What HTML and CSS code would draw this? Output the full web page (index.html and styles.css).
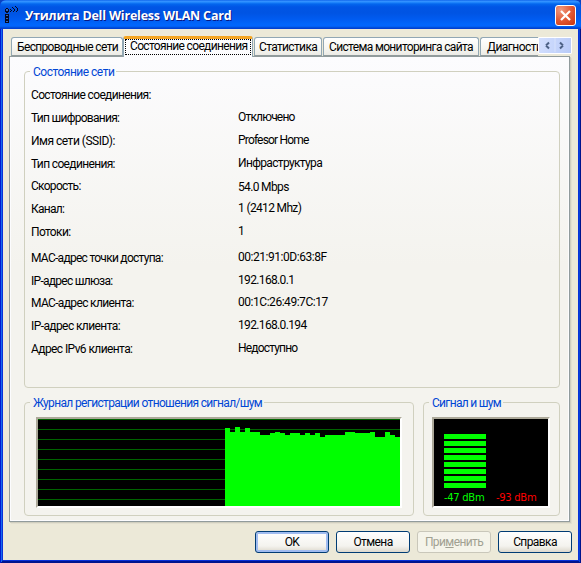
FILE: index.html
```html
<!DOCTYPE html>
<html lang="ru">
<head>
<meta charset="utf-8">
<title>Утилита Dell Wireless WLAN Card</title>
<link rel="stylesheet" href="styles.css">
</head>
<body>
<div class="window">
  <header class="titlebar">
    <svg class="app-icon" width="16" height="18" viewBox="0 0 16 18" shape-rendering="crispEdges"><path fill="#050a20" d="M1 3h1v3H1zM2 2h2v1H2zM4 3h1v3H4zM2 5h2v2H2zM1 8h4v9H1z"/><path fill="#3c66b8" d="M2 9h2v1H2zM2 12h2v1H2zM2 15h2v1H2zM2 3h2v2H2z"/><path fill="#050a20" d="M6 3h1v1H6zM7 4h1v1H7zM6 5h1v1H6zM8 1h1v1H8zM9 2h1v1H9zM10 3h1v2h-1zM9 5h1v1H9zM11 0h1v1h-1zM12 1h1v1h-1zM13 2h1v3h-1zM12 5h1v1h-1z"/></svg>
    <h1 class="title">Утилита Dell Wireless WLAN Card</h1>
    <button class="close" aria-label="Закрыть"><svg width="19" height="19" viewBox="0 0 19 19"><path d="M5 5l9 9M14 5l-9 9" stroke="#fff" stroke-width="2.2"/></svg></button>
  </header>
  <main class="client">
    <nav class="tabs">
      <div class="tab t1"><span>Беспроводные сети</span></div>
      <div class="tab t2 active"><span>Состояние соединения</span></div>
      <div class="tab t3"><span>Статистика</span></div>
      <div class="tab t4"><span>Система мониторинга сайта</span></div>
      <div class="tab t5"><span>Диагностика</span></div>
      <div class="spinner">
        <svg width="34" height="17" viewBox="0 0 34 17"><path d="M17 1v14" stroke="#d7e2fc"/><path d="M8 8.5l3-3M8 8.5l3 3M25 8.5l-3-3M25 8.5l-3 3" fill="none" stroke="#4d6185" stroke-width="2"/></svg>
      </div>
    </nav>
    <section class="panel">
      <section class="group status">
        <h2 class="legend l1">Состояние сети</h2>
        <dl class="rows">
          <dt class="a1">Состояние соединения:</dt><dd></dd>
          <dt class="a2">Тип шифрования:</dt><dd class="b2">Отключено</dd>
          <dt class="a3">Имя сети (SSID):</dt><dd class="b3">Profesor Home</dd>
          <dt class="a4">Тип соединения:</dt><dd class="b4">Инфраструктура</dd>
          <dt class="a5">Скорость:</dt><dd class="b5">54.0 Mbps</dd>
          <dt class="a6">Канал:</dt><dd class="b6">1 (2412 Mhz)</dd>
          <dt class="a7">Потоки:</dt><dd class="b7">1</dd>
          <dt class="a8">MAC-адрес точки доступа:</dt><dd class="b8">00:21:91:0D:63:8F</dd>
          <dt class="a9">IP-адрес шлюза:</dt><dd class="b9">192.168.0.1</dd>
          <dt class="a10">MAC-адрес клиента:</dt><dd class="b10">00:1C:26:49:7C:17</dd>
          <dt class="a11">IP-адрес клиента:</dt><dd class="b11">192.168.0.194</dd>
          <dt class="a12">Адрес IPv6 клиента:</dt><dd class="b12">Недоступно</dd>
        </dl>
      </section>
      <div class="charts">
        <section class="group log">
          <h2 class="legend l2">Журнал регистрации отношения сигнал/шум</h2>
          <div class="screen">
            <svg width="362" height="87" viewBox="0 0 362 87" shape-rendering="crispEdges"><path stroke="#006300" d="M0 .5h362M0 10.5h362M0 20.5h362M0 30.5h362M0 40.5h362M0 50.5h362M0 60.5h362M0 70.5h362M0 80.5h362"/><path fill="#0f0" d="M187 87V9h5v4h5V8h5v5h5V9h5v4h10v3h10v-2h5v-1h5v1h5v2h5v-2h10v2h5v-2h5v2h5v-2h5v4h5v-2h20v-3h10v1h15v-1h5v5h10v-5h5v3h5v2h5v69z"/></svg>
          </div>
        </section>
        <section class="group level">
          <h2 class="legend l3">Сигнал и шум</h2>
          <div class="screen meter">
            <div class="bars"><i></i><i></i><i></i><i></i><i></i><i></i><i></i><i></i></div>
            <div class="dbm"><span class="sig">-47 dBm</span><span class="noise">-93 dBm</span></div>
          </div>
        </section>
      </div>
    </section>
    <footer class="buttons">
      <button class="btn default"><span class="k1">OK</span></button>
      <button class="btn"><span class="k2">Отмена</span></button>
      <button class="btn disabled" disabled><span class="k3">При<u>м</u>енить</span></button>
      <button class="btn"><span class="k4">Справка</span></button>
    </footer>
  </main>
</div>
</body>
</html>
```
FILE: styles.css
```css
* { box-sizing: border-box; }
body { margin: 0; background: #0a42c0; font: 12px/14px Roboto, "Liberation Sans", sans-serif; color: #000; overflow: hidden; }
h1, h2, dl, dd { margin: 0; font: inherit; }
button { font: inherit; padding: 0; margin: 0; }
.window { width: 581px; height: 563px; background: #0831d9; border-radius: 6px 6px 0 0; padding: 0 3px 3px; overflow: hidden; box-shadow: inset 1px 0 #0019cf, inset -1px 0 #00138c, inset 0 -1px #00138c, inset 2px 0 #166aee, inset -2px 0 #0441d8, inset 0 -2px #001590; }
.titlebar { display: flex; align-items: center; height: 29px; margin: 0 -3px; padding: 2px 5px 0 4px; background: linear-gradient(#0058e6 0, #3a93ff 1px, #288eff 2px, #0366ee 4px, #0055e5 7px, #0054e3 13px, #005bf0 19px, #0066fb 24px, #0265fe 26px, #005be8 27px, #0043cf 28px, #003dd7 29px); }
.app-icon { margin: -1px 5px 0 0; }
.title { flex: 1; color: #fff; font: bold 12.5px/18px "Open Sans", sans-serif; letter-spacing: -.2px; white-space: nowrap; text-shadow: 1px 1px #0a1883; }
.close { width: 21px; height: 21px; border: 1px solid #fff; border-radius: 3px; background: radial-gradient(circle at 25% 20%, #f09a80, #e25a36 50%, #c8330c); display: flex; }
.client { height: 531px; background: #ece9d8; padding: 7px 7px 0 6px; }
.tabs { display: flex; align-items: flex-end; height: 21px; padding-left: 2px; margin-bottom: -1px; position: relative; z-index: 1; letter-spacing: -.65px; }
.tab { height: 19px; margin-bottom: 1px; border: 1px solid #91a7b4; border-bottom-color: #919b9c; border-radius: 3px 3px 0 0; background: linear-gradient(#fff, #f6f6f1 60%, #ecebe6); white-space: nowrap; overflow: hidden; line-height: 19px; padding-left: 5px; flex: none; }
.t1 { width: 112px; }
.t2 { width: 130px; }
.t3 { width: 68px; margin-left: 1px; padding-left: 4px; }
.t4 { width: 156px; margin-left: 1px; }
.t5 { width: 58px; margin-left: 1px; border-right: 0; border-radius: 3px 0 0 0; padding-left: 6px; letter-spacing: -.55px; }
.tab.active { height: 21px; margin-bottom: 0; background: #fcfcfe; border-top: 3px solid #f5a623; border-bottom: 0; padding: 0 1px; }
.tab.active span { display: block; height: 16px; border: 1px dotted #000; line-height: 12px; padding-left: 4px; }
.spinner { width: 34px; height: 17px; margin-bottom: 3px; border: 1px solid #fff; border-radius: 1px; background: linear-gradient(100deg, #d3dffe, #b9cbf8); display: flex; align-items: center; justify-content: center; overflow: hidden; flex: none; }
.spinner svg { flex: none; }
.panel { width: 561px; height: 466px; border: 1px solid #919b9c; box-shadow: inset 0 0 0 1px #fcfcfe, 1px 1px #d0cebf, 2px 2px #e3e0d0; background: linear-gradient(#fcfcfe, #f4f3ee 45%, #f4f3ee); padding: 14px 9px 0 14px; }
.group { border: 1px solid #d0d0bf; border-radius: 4px; }
.legend { color: #0046d5; width: max-content; margin: -7px 0 0 5px; padding: 0 2px 0 3px; white-space: nowrap; }
.status { width: 536px; height: 317px; }
.status .legend { background: #fbfbfc; }
.l1 { letter-spacing: -.5px; }
.l2 { letter-spacing: -.65px; }
.l3 { letter-spacing: -.7px; }
.rows { display: grid; grid-template-columns: 207px 1fr; grid-template-rows: 23px 23px 23px 22px 23px 23px 26px 23px 22px 23px 23px 23px; padding: 9px 0 0 6px; white-space: nowrap; letter-spacing: -.65px; }
dd { margin-top: -1px; }
.a2, .a5, .a6, .a8, .a9 { letter-spacing: -.72px; }
.a3 { letter-spacing: -.5px; }
.a11, .a12 { letter-spacing: -.59px; }
.b2, .b3, .b12 { letter-spacing: -.82px; }
.b8, .b10 { letter-spacing: -.46px; }
.b5 { margin-top: 1px; }
.charts { display: flex; gap: 9px; margin-top: 14px; }
.charts .group { height: 114px; flex: none; }
.charts .legend { background: #f4f3ee; }
.log { width: 390px; }
.level { width: 137px; }
.screen { width: 366px; height: 91px; margin: 7px 0 0 11px; border: 2px solid; border-color: #aca899 #fff #fff #aca899; background: #000; display: flex; }
.meter { width: 118px; margin-left: 8px; flex-direction: column; padding: 15px 0 0 10px; }
.bars { display: grid; gap: 2px; width: 42px; }
.bars i { height: 5px; background: #0f0; }
.dbm { display: flex; font: 10px/12px "DejaVu Sans", sans-serif; letter-spacing: -.3px; margin-top: 4px; }
.dbm span { width: 52px; white-space: nowrap; }
.sig { color: #0f0; }
.noise { color: #f00; }
.buttons { display: flex; justify-content: flex-end; gap: 7px; margin: 9px -1px 0 0; }
.btn { width: 74px; height: 22px; border: 1px solid #003c74; border-radius: 3px; background: linear-gradient(#fff, #f4f3ee 70%, #dcd8cc); color: #000; letter-spacing: -.6px; }
.default { box-shadow: inset 0 0 0 2px #a0bcf0, inset 0 -2px #6982ee; }
.disabled { border-color: #c9c7ba; background: #f5f4ea; color: #a1a192; }
```
